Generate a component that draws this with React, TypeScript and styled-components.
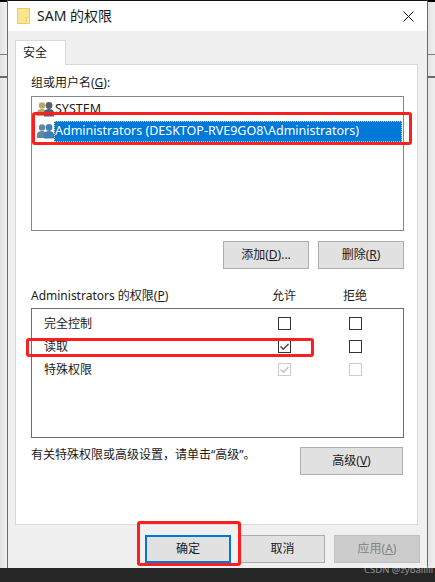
import React, { FunctionComponent } from "react";
import styled, { createGlobalStyle } from "styled-components";

const GlobalStyle = createGlobalStyle`
  html, body {
    margin: 0;
    padding: 0;
    background: #262626;
  }
`;

const Page = styled.div`
  position: relative;
  width: 435px;
  height: 582px;
  overflow: hidden;
  display: flex;
  flex-direction: column;
  font-family: "Noto Sans", "Noto Sans CJK SC", sans-serif;
  font-size: 12px;
  line-height: 16px;
  color: #1a1a1a;
`;

const Desktop = styled.div`
  flex: 1;
  min-height: 0;
  display: flex;
`;

const Strip = styled.div<{ $width: number }>`
  width: ${(p) => p.$width}px;
  flex: none;
  background:
    linear-gradient(#000, #000) 0 0 / 100% 2px no-repeat,
    linear-gradient(#7d7d7d, #7d7d7d) 0 54px / 100% 1px no-repeat,
    linear-gradient(#6c6c6c, #6c6c6c) 0 76px / 100% 2px no-repeat,
    linear-gradient(90deg, #e2e2e2, #f1f1f1);
`;

const Window = styled.div`
  flex: 1;
  min-width: 0;
  display: flex;
  flex-direction: column;
  border-top: 1px solid #111;
  border-left: 1px solid #6a6a6a;
  border-right: 1px solid #6a6a6a;
`;

const TitleBar = styled.div`
  height: 30px;
  flex: none;
  background: #fff;
  display: flex;
  align-items: center;
  padding: 0 13px 0 9px;
  gap: 6px;
  font-size: 14px;
`;

const TitleText = styled.span`
  flex: 1;
`;

const Content = styled.div`
  flex: 1;
  min-height: 0;
  background: #f0f0f0;
  display: flex;
  flex-direction: column;
  padding: 9px 9px 0 7px;
`;

const Tab = styled.div`
  width: 51px;
  height: 25px;
  box-sizing: border-box;
  margin-bottom: -1px;
  position: relative;
  z-index: 1;
  background: #fff;
  border: 1px solid #d9d9d9;
  border-bottom: none;
  padding: 4px 0 0 7px;
`;

const Panel = styled.div`
  height: 461px;
  box-sizing: border-box;
  background: #fff;
  border: 1px solid #d9d9d9;
  padding: 10px 13px 0 15px;
`;

const FieldLabel = styled.div`
  height: 21px;
`;

const UserList = styled.div`
  height: 135px;
  box-sizing: border-box;
  border: 1px solid #828790;
  padding: 1px 0 0 5px;
  display: flex;
  flex-direction: column;
`;

const UserRow = styled.div`
  height: 22px;
  display: flex;
  align-items: center;
  padding-right: 1px;
`;

const UserName = styled.span<{ $selected?: boolean }>`
  flex: 1;
  height: 21px;
  line-height: 20px;
  padding-left: 1px;
  box-sizing: border-box;
  font-size: 12.5px;
  ${(p) =>
    p.$selected &&
    `
    background: #0078d7;
    color: #fff;
    outline: 1px dotted #f3c58b;
    outline-offset: -1px;
  `}
`;

const ButtonRow = styled.div<{ $top: number }>`
  display: flex;
  justify-content: flex-end;
  gap: 9px;
  margin-top: ${(p) => p.$top}px;
`;

const Button = styled.div<{ $width?: number; $kind?: "default" | "disabled" }>`
  width: ${(p) => p.$width ?? 86}px;
  height: 28px;
  box-sizing: border-box;
  display: flex;
  align-items: center;
  justify-content: center;
  background: ${(p) => (p.$kind === "disabled" ? "#cccccc" : "#e1e1e1")};
  color: ${(p) => (p.$kind === "disabled" ? "#838383" : "#1a1a1a")};
  border: ${(p) =>
    p.$kind === "default"
      ? "2px solid #0078d7"
      : p.$kind === "disabled"
        ? "1px solid #bfbfbf"
        : "1px solid #adadad"};
`;

const PermHeader = styled.div`
  display: grid;
  grid-template-columns: 194px 24px 24px;
  column-gap: 47px;
  justify-items: center;
  margin-top: 19px;
  height: 20px;
`;

const PermTitle = styled.span`
  justify-self: start;
  white-space: nowrap;
`;

const PermList = styled.div`
  height: 130px;
  box-sizing: border-box;
  border: 1px solid #6d6d6d;
  padding: 3px 0 0 12px;
`;

const PermRow = styled.div`
  display: grid;
  grid-template-columns: 181px 24px 24px;
  column-gap: 47px;
  justify-items: center;
  align-items: center;
  height: 23px;
`;

const PermName = styled.span`
  justify-self: start;
`;

const CheckBox = styled.div<{ $muted?: boolean }>`
  width: 13px;
  height: 13px;
  box-sizing: border-box;
  border: 1px solid ${(p) => (p.$muted ? "#cccccc" : "#333333")};
  background: #fff;
  display: flex;
  align-items: center;
  justify-content: center;
`;

const AdvancedRow = styled.div`
  display: flex;
  justify-content: space-between;
  align-items: flex-start;
  margin: 9px 1px 0 0;
`;

const Hint = styled.span`
  white-space: nowrap;
`;

const Footer = styled.div`
  display: flex;
  justify-content: flex-end;
  gap: 9px;
  padding: 10px 0 0;
  margin-right: -2px;
`;

const BottomBar = styled.div`
  height: 14px;
  flex: none;
  background: #262626;
`;

const RedBox = styled.div<{ $x: number; $y: number; $w: number; $h: number }>`
  position: absolute;
  left: ${(p) => p.$x}px;
  top: ${(p) => p.$y}px;
  width: ${(p) => p.$w}px;
  height: ${(p) => p.$h}px;
  box-sizing: border-box;
  border: 3px solid #fb1f1f;
  border-radius: 3px;
`;

const Watermark = styled.span`
  position: absolute;
  left: 364px;
  top: 562px;
  font-size: 9.5px;
  color: rgba(255, 255, 255, 0.5);
  white-space: nowrap;
`;

const FolderIcon = () => (
  <svg width="14" height="17" viewBox="0 0 14 17">
    <rect x="0.5" y="0.5" width="12" height="15" fill="#fde48f" stroke="#eecb63" />
    <rect x="9.5" y="9.5" width="3" height="6" fill="#fff3c4" stroke="#eecb63" />
  </svg>
);

const CloseIcon = () => (
  <svg width="11" height="11" viewBox="0 0 11 11">
    <path d="M0.5 0.5L10.5 10.5M10.5 0.5L0.5 10.5" stroke="#111" strokeWidth="1" fill="none" />
  </svg>
);

const CheckMark = ({ color }: { color: string }) => (
  <svg width="9" height="8" viewBox="0 0 9 8">
    <path d="M0.5 3.5L3.3 6.2L8.5 1" stroke={color} strokeWidth="1.5" fill="none" />
  </svg>
);

const UsersIcon = ({ front, back }: { front: string; back: string }) => (
  <svg width="17" height="16" viewBox="0 0 17 16" style={{ flex: "none" }}>
    <circle cx="5" cy="4.5" r="3.2" fill={back} />
    <path d="M0 15V11.5C0 9.5 2 8 5 8C8 8 9 9.5 9 11.5V15Z" fill={back} />
    <circle cx="12" cy="4.5" r="3.4" fill={front} />
    <path d="M7 15.5V11.5C7 9.5 9 8 12 8C15 8 17 9.5 17 11.5V15.5Z" fill={front} />
  </svg>
);

type Perm = {
  name: string;
  allow: boolean;
  muted?: boolean;
};

const perms: Perm[] = [
  { name: "完全控制", allow: false },
  { name: "读取", allow: true },
  { name: "特殊权限", allow: true, muted: true },
];

const App: FunctionComponent = () => {
  return (
    <Page>
      <GlobalStyle />
      <Desktop>
        <Strip $width={7} />
        <Window>
          <TitleBar>
            <FolderIcon />
            <TitleText>SAM 的权限</TitleText>
            <CloseIcon />
          </TitleBar>
          <Content>
            <Tab>安全</Tab>
            <Panel>
              <FieldLabel>
                组或用户名(<u>G</u>):
              </FieldLabel>
              <UserList>
                <UserRow>
                  <UsersIcon front="#54606e" back="#b9a56a" />
                  <UserName>SYSTEM</UserName>
                </UserRow>
                <UserRow>
                  <UsersIcon front="#3f7fb5" back="#64879f" />
                  <UserName $selected>
                    Administrators (DESKTOP-RVE9GO8\Administrators)
                  </UserName>
                </UserRow>
              </UserList>
              <ButtonRow $top={10}>
                <Button>
                  添加(<u>D</u>)...
                </Button>
                <Button>
                  删除(<u>R</u>)
                </Button>
              </ButtonRow>
              <PermHeader>
                <PermTitle>
                  Administrators 的权限(<u>P</u>)
                </PermTitle>
                <span>允许</span>
                <span>拒绝</span>
              </PermHeader>
              <PermList>
                {perms.map((perm) => (
                  <PermRow key={perm.name}>
                    <PermName>{perm.name}</PermName>
                    <CheckBox $muted={perm.muted}>
                      {perm.allow && (
                        <CheckMark color={perm.muted ? "#c4c4c4" : "#444444"} />
                      )}
                    </CheckBox>
                    <CheckBox $muted={perm.muted} />
                  </PermRow>
                ))}
              </PermList>
              <AdvancedRow>
                <Hint>有关特殊权限或高级设置，请单击“高级”。</Hint>
                <Button $width={103}>
                  高级(<u>V</u>)
                </Button>
              </AdvancedRow>
            </Panel>
            <Footer>
              <Button $kind="default">确定</Button>
              <Button $width={85}>取消</Button>
              <Button $kind="disabled">
                应用(<u>A</u>)
              </Button>
            </Footer>
          </Content>
        </Window>
        <Strip $width={7} />
      </Desktop>
      <BottomBar />
      <RedBox $x={32} $y={112} $w={380} $h={33} />
      <RedBox $x={26} $y={338} $w={288} $h={19} />
      <RedBox $x={137} $y={521} $w={104} $h={45} />
      <Watermark>CSDN @zybaillli</Watermark>
    </Page>
  );
};

export default App;
